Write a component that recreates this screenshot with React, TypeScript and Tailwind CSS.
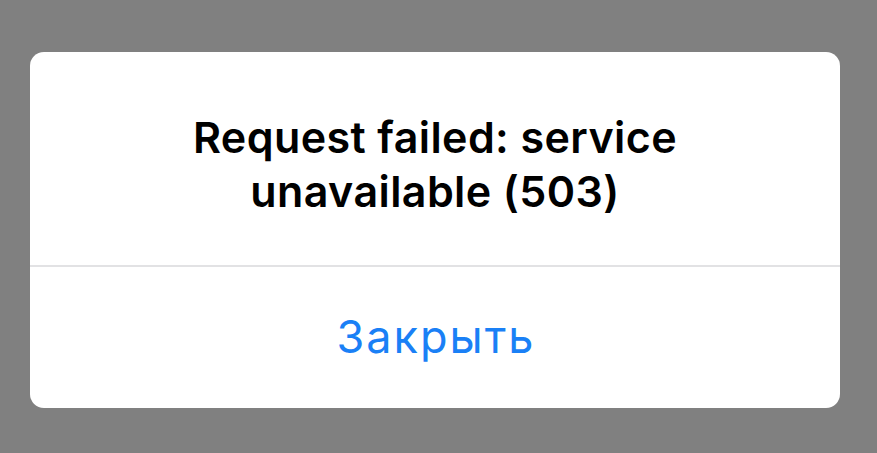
export default function App() {
  return (
    <div className="flex h-[453px] w-full items-start bg-[#808080] pl-[30px] pt-[52px]">
      <div className="flex h-[356px] w-[810px] flex-col overflow-hidden rounded-[14px] bg-white">
        <div className="flex h-[213px] items-center justify-center px-10 pt-[10px]">
          <p className="text-center font-['Inter',sans-serif] text-[43px] font-semibold leading-[54px] tracking-[0.4px] text-black">
            Request failed: service
            <br />
            unavailable (503)
          </p>
        </div>
        <div className="h-[2px] bg-[#e2e2e4]" />
        <button
          type="button"
          className="flex flex-1 items-center justify-center pb-[2px] pl-[2px] font-['Inter',sans-serif] text-[45px] font-normal tracking-[2px] text-[#1a80f6]"
        >
          Закрыть
        </button>
      </div>
    </div>
  );
}
